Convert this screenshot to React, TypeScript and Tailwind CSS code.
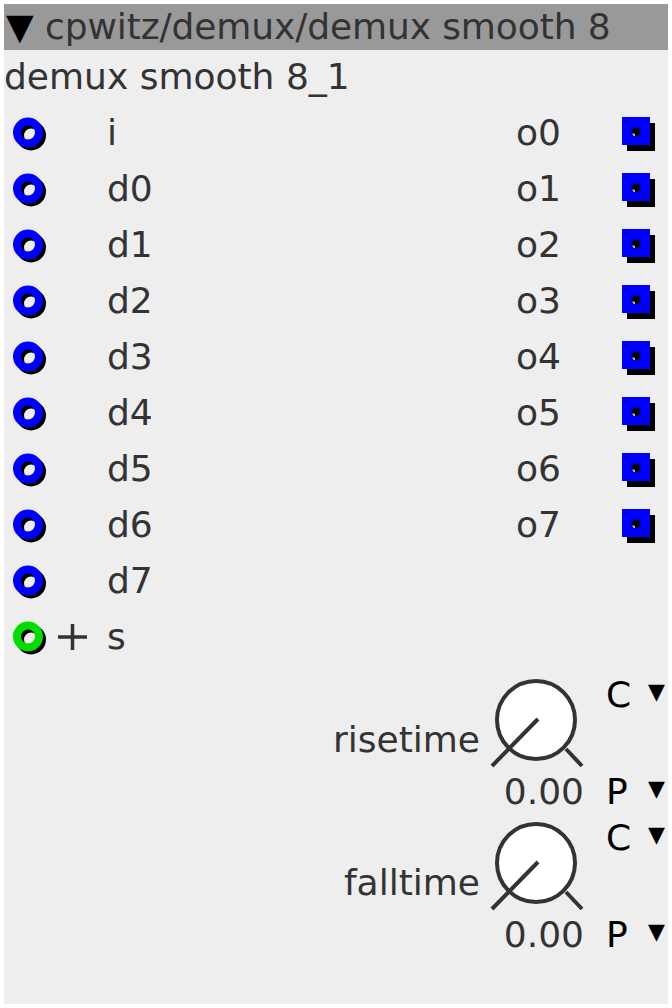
import React from "react";

const inlets = ["i", "d0", "d1", "d2", "d3", "d4", "d5", "d6", "d7"];
const outlets = ["o0", "o1", "o2", "o3", "o4", "o5", "o6", "o7"];

function Inlet({ color }: { color: string }) {
  return (
    <svg width="36" height="36" viewBox="0 0 36 36">
      <circle cx="21" cy="20.5" r="11" fill="none" stroke="#000" strokeWidth="8" />
      <circle cx="18" cy="17.5" r="11" fill="none" stroke={color} strokeWidth="8" />
    </svg>
  );
}

function Outlet() {
  return (
    <svg width="36" height="36" viewBox="0 0 36 36">
      <rect x="7" y="8" width="28" height="28" fill="#000" />
      <rect x="2" y="2" width="28" height="28" fill="#0000ff" />
      <path d="M6 7V6h1M25 6h1v1M6 25v1h1M25 26h1v-1" stroke="#000" strokeWidth="1" fill="none" />
      <circle cx="16" cy="17" r="4.5" fill="#000" />
      <path d="M12.4 19 A4.2 4.2 0 0 0 15.2 21.2 L14.2 18.2 Z" fill="#fff" />
    </svg>
  );
}

function Plus() {
  return (
    <svg width="32" height="32" viewBox="0 0 32 32">
      <path d="M2 16H31M16.5 3V29" stroke="#333" strokeWidth="3.5" />
    </svg>
  );
}

function Knob() {
  return (
    <svg width="96" height="96" viewBox="0 0 96 96">
      <circle cx="48" cy="46" r="39" fill="#fff" stroke="#333" strokeWidth="4" />
      <line x1="50" y1="45" x2="4" y2="92" stroke="#333" strokeWidth="4" />
      <line x1="78" y1="75" x2="94" y2="92" stroke="#333" strokeWidth="4" />
    </svg>
  );
}

function Picker({ letter }: { letter: string }) {
  return (
    <div className="flex h-[40px] w-[56px] items-start leading-[40px] text-black">
      <span className="w-[42px] shrink-0">{letter}</span>
      <span className="mt-[6px] w-[14px] shrink-0 text-[22px] leading-[22px]">▼</span>
    </div>
  );
}

function Param({ name }: { name: string }) {
  return (
    <div className="flex justify-end pr-[6px]">
      <div className="mr-[8px] mt-[46px] h-[40px] leading-[40px]">{name}</div>
      <div className="flex w-[96px] flex-col">
        <Knob />
        <div className="mt-[2px] h-[40px] text-right leading-[40px]">0.00</div>
      </div>
      <div className="ml-[22px] flex h-[138px] w-[56px] flex-col justify-between pt-[1px]">
        <Picker letter="C" />
        <Picker letter="P" />
      </div>
    </div>
  );
}

export default function App() {
  return (
    <div className="h-[1008px] w-[672px] bg-white p-[4px] font-['DejaVu_Sans',sans-serif] text-[36px] text-[#333]">
      <div className="flex h-full flex-col bg-[#eeeeee]">
        <div className="h-[46px] bg-[#999999] pl-[2px] leading-[46px] whitespace-nowrap tracking-[-0.1px]">
          <span className="text-black">▼</span> cpwitz/demux/demux smooth 8
        </div>
        <div className="h-[55px] leading-[54px]">demux smooth 8_1</div>

        <div className="flex justify-between">
          <div className="flex flex-col">
            {inlets.map((n) => (
              <div key={n} className="flex h-[56px] items-center">
                <div className="ml-[6px] w-[36px]">
                  <Inlet color="#0000ff" />
                </div>
                <div className="w-[61px]" />
                <span className="leading-[56px]">{n}</span>
              </div>
            ))}
            <div className="flex h-[56px] items-center">
              <div className="ml-[6px] w-[36px]">
                <Inlet color="#00dd00" />
              </div>
              <div className="ml-[10px] w-[51px]">
                <Plus />
              </div>
              <span className="leading-[56px]">s</span>
            </div>
          </div>

          <div className="mr-[12px] flex flex-col">
            {outlets.map((n) => (
              <div key={n} className="flex h-[56px] items-center">
                <span className="w-[104px] leading-[56px]">{n}</span>
                <Outlet />
              </div>
            ))}
          </div>
        </div>

        <div className="mt-[9px] flex flex-col gap-[5px]">
          <Param name="risetime" />
          <Param name="falltime" />
        </div>
      </div>
    </div>
  );
}
